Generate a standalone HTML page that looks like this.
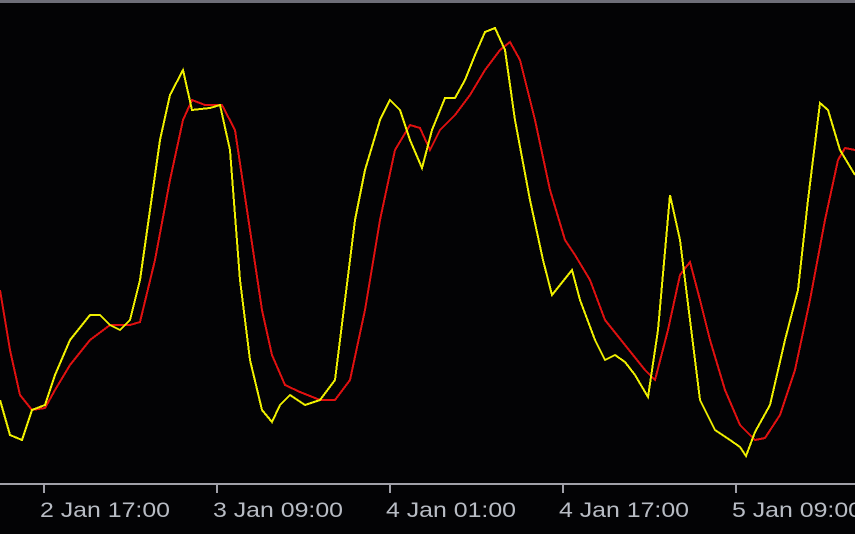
<!DOCTYPE html>
<html><head><meta charset="utf-8"><style>
html,body{margin:0;padding:0;background:#000;width:855px;height:534px;overflow:hidden}
svg{display:block}
text{font-family:"Liberation Sans",sans-serif;font-size:21px;fill:#b8bcc4}
</style></head><body>
<svg width="855" height="534" viewBox="0 0 855 534">
<rect width="855" height="534" fill="#030305"/>
<rect x="0" y="0" width="855" height="3" fill="#6e6e78"/>
<polyline fill="none" stroke="#e01010" stroke-width="2" shape-rendering="crispEdges" points="0,290 10,350 20,395 32,410 45,408 55,390 70,365 90,340 110,325 130,325 140,322 155,260 170,180 183,120 192,100 205,105 222,105 235,130 250,230 262,310 272,355 285,385 300,392 320,400 335,400 350,380 365,310 380,220 395,150 410,125 420,128 430,150 440,130 455,115 470,95 485,70 500,50 510,42 520,60 535,120 550,190 565,240 575,255 590,280 605,320 625,345 645,370 655,380 668,330 680,275 690,262 700,300 710,340 725,390 740,425 755,440 765,438 780,415 795,370 810,300 825,220 838,160 845,148 855,150"/>
<polyline fill="none" stroke="#f0f000" stroke-width="2" shape-rendering="crispEdges" points="0,400 10,435 22,440 32,410 45,405 55,375 70,340 90,315 100,315 110,325 120,330 130,320 140,280 150,210 160,140 170,95 183,70 192,110 210,108 220,105 230,150 240,280 250,360 262,410 272,422 280,405 290,395 305,405 320,400 335,380 345,300 355,220 365,170 380,120 390,100 400,110 410,140 422,168 432,130 445,98 455,98 465,80 475,55 485,32 495,28 505,50 515,120 530,200 543,260 552,295 560,285 572,270 580,300 595,340 605,360 615,355 625,362 635,375 648,397 658,330 670,195 680,240 690,320 700,400 715,430 730,440 740,447 746,456 755,432 770,405 785,340 798,290 808,200 820,103 828,110 840,150 855,175"/>
<rect x="0" y="483" width="855" height="2" fill="#a0a0a8"/>
<g fill="#a0a0a8">
<rect x="43" y="483" width="2" height="10"/><rect x="216" y="483" width="2" height="10"/><rect x="389" y="483" width="2" height="10"/><rect x="562" y="483" width="2" height="10"/><rect x="735" y="483" width="2" height="10"/>
</g>
<text x="40" y="517" textLength="130" lengthAdjust="spacingAndGlyphs">2 Jan 17:00</text>
<text x="213" y="517" textLength="130" lengthAdjust="spacingAndGlyphs">3 Jan 09:00</text>
<text x="386" y="517" textLength="130" lengthAdjust="spacingAndGlyphs">4 Jan 01:00</text>
<text x="559" y="517" textLength="130" lengthAdjust="spacingAndGlyphs">4 Jan 17:00</text>
<text x="732" y="517" textLength="130" lengthAdjust="spacingAndGlyphs">5 Jan 09:00</text>
</svg>
</body></html>
